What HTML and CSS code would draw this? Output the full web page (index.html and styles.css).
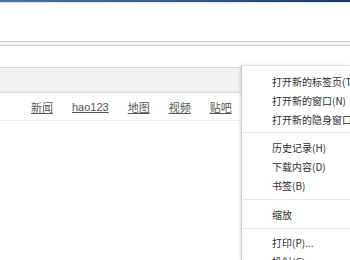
FILE: index.html
```html
<!DOCTYPE html>
<html lang="zh-CN">
<head>
	<meta charset="UTF-8">
	<title>百度一下</title>
	<link rel="stylesheet" href="styles.css">
</head>
<body>
	<div class="top-bar"></div>
	<div class="tool-space"></div>
	<div class="double-line"></div>
	<div class="page-space"></div>
	<div class="gray-band"></div>
	<div class="nav">
		<a href="#">新闻</a>
		<a href="#">hao123</a>
		<a href="#">地图</a>
		<a href="#">视频</a>
		<a href="#">贴吧</a>
	</div>

	<!-- 浏览器下拉菜单 -->
	<ul class="menu">
		<li>打开新的标签页(T)</li>
		<li>打开新的窗口(N)</li>
		<li>打开新的隐身窗口(I)</li>
		<li class="sep sep1"></li>
		<li>历史记录(H)</li>
		<li>下载内容(D)</li>
		<li>书签(B)</li>
		<li class="sep sep2"></li>
		<li>缩放</li>
		<li class="sep sep3"></li>
		<li>打印(P)...</li>
		<li>投射(C)...</li>
	</ul>
</body>
</html>
```

FILE: styles.css
```css
* {
	margin: 0;
	padding: 0;
	list-style: none;
}
html, body {
	height: 100%;
	overflow: hidden;
}
body {
	background: #fff;
	font-family: "Liberation Sans", "Noto Sans CJK SC", sans-serif;
	position: relative;
}
.top-bar {
	height: 2px;
	background: linear-gradient(to right, #4d6f9c, #3a5a86 50%, #1d3a60);
	border-bottom: 1px solid #d6e2ef;
}
.tool-space {
	height: 38px;
}
.double-line {
	height: 3px;
	background: #f3f3f3;
	border-top: 1px solid #cfcfcf;
	border-bottom: 1px solid #d3d3d3;
}
.page-space {
	height: 21px;
}
.gray-band {
	height: 24px;
	background: #f1f1f1;
	border-top: 1px solid #d3d3d3;
	border-bottom: 1px solid #dedede;
}
.nav {
	height: 27px;
	display: flex;
	align-items: center;
	gap: 19px;
	padding-left: 31px;
	border-bottom: 1px solid #ececec;
}
.nav a {
	font-size: 11px;
	color: #555;
	text-decoration: underline;
}
.menu {
	position: absolute;
	left: 241px;
	top: 65px;
	right: 0;
	bottom: 0;
	background: #fff;
	border-left: 1px solid #cbcbcb;
	border-top: 1px solid #e2e2e2;
	box-shadow: -1px 0 3px rgba(0,0,0,0.12);
	padding-top: 6px;
	font-family: "Noto Sans CJK SC", sans-serif;
	font-size: 10px;
	color: #2e2e2e;
	white-space: nowrap;
}
.menu li {
	height: 19px;
	line-height: 19px;
	padding-left: 30px;
}
.menu li.sep {
	height: 1px;
	padding: 0;
	margin-left: 1px;
	background: #e6e6e6;
}
.sep1 {
	margin: 3px 0 5px;
}
.sep2 {
	margin: 4px 0 5px;
}
.sep3 {
	margin: 4px 0 4px;
}
```
